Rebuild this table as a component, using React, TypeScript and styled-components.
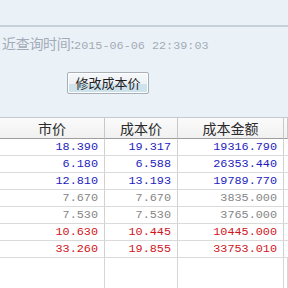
import styled, { createGlobalStyle } from 'styled-components';

const GlobalStyle = createGlobalStyle`
    html, body {
        margin: 0;
        padding: 0;
        background: #ebf2f7;
    }
`;

const Page = styled.div`
    display: flex;
    flex-direction: column;
    width: 288px;
    height: 288px;
    overflow: hidden;
    font-family: "Noto Sans CJK SC", sans-serif;
`;

const TopStrip = styled.div`
    height: 25px;
    border-bottom: 2px solid #c6d0d8;
`;

const QueryLine = styled.div`
    display: flex;
    align-items: baseline;
    height: 16px;
    line-height: 16px;
    margin-top: 8px;
    padding-left: 2px;
    color: #a3abb8;
    white-space: nowrap;
`;

const Label = styled.span`
    font-size: 14px;
    letter-spacing: -0.3px;
`;

const Mono = styled.span`
    font-family: "Liberation Mono", "DejaVu Sans Mono", monospace;
    font-size: 11.8px;
`;

const ButtonRow = styled.div`
    display: flex;
    padding-left: 67px;
    margin-top: 21px;
`;

const Button = styled.button`
    width: 82px;
    height: 22px;
    padding: 0;
    border: 1px solid #a7b0b8;
    border-radius: 2px;
    background: linear-gradient(#f6f8fa 0%, #eef2f5 55%, #cfe3ec 56%, #cde2ea 100%);
    box-shadow: inset 0 0 0 1px #ffffff;
    color: #1e1e1e;
    font-family: "Noto Sans CJK SC", sans-serif;
    font-size: 13px;
    line-height: 20px;
`;

const Table = styled.div`
    flex: 1;
    display: flex;
    flex-direction: column;
    margin-top: 23px;
    background: #ffffff;
    border-top: 1px solid #c3cbd2;
`;

const Row = styled.div<{ $fill?: boolean }>`
    display: grid;
    grid-template-columns: 105px 73px 106px 1fr;
    flex: ${p => (p.$fill ? 1 : 'none')};
`;

const HeadCell = styled.div`
    height: 20px;
    line-height: 20px;
    text-align: center;
    font-size: 14px;
    color: #2a2a2a;
    background: linear-gradient(#fbfbfb, #f1f1f1);
    border-right: 1px solid #c8c8c8;
    border-bottom: 1px solid #9e9e9e;
`;

const Cell = styled.div<{ $tone?: string }>`
    height: 16px;
    line-height: 17px;
    padding-right: 6px;
    text-align: right;
    font-family: "Liberation Mono", "DejaVu Sans Mono", monospace;
    font-size: 11.8px;
    color: ${p => p.$tone ?? '#000'};
    border-right: 1px solid #d2d2d2;
    border-bottom: 1px solid #dadada;
`;

const EmptyCell = styled.div`
    border-right: 1px solid #d6d6d6;
`;

const tones: Record<string, string> = {
    up: '#d0141c',
    down: '#1c1cc0',
    flat: '#858585',
};

const rows = [
    ['18.390', '19.317', '19316.790', 'down'],
    ['6.180', '6.588', '26353.440', 'down'],
    ['12.810', '13.193', '19789.770', 'down'],
    ['7.670', '7.670', '3835.000', 'flat'],
    ['7.530', '7.530', '3765.000', 'flat'],
    ['10.630', '10.445', '10445.000', 'up'],
    ['33.260', '19.855', '33753.010', 'up'],
];

export default function App() {
    return (
        <>
            <GlobalStyle />
            <Page>
                <TopStrip />
                <QueryLine>
                    <Label>近查询时间:</Label>
                    <Mono>2015-06-06 22:39:03</Mono>
                </QueryLine>
                <ButtonRow>
                    <Button>修改成本价</Button>
                </ButtonRow>
                <Table>
                    <Row>
                        <HeadCell>市价</HeadCell>
                        <HeadCell>成本价</HeadCell>
                        <HeadCell>成本金额</HeadCell>
                        <HeadCell />
                    </Row>
                    {rows.map(([price, cost, amount, tone]) => (
                        <Row key={amount}>
                            <Cell $tone={tones[tone]}>{price}</Cell>
                            <Cell $tone={tones[tone]}>{cost}</Cell>
                            <Cell $tone={tones[tone]}>{amount}</Cell>
                            <Cell />
                        </Row>
                    ))}
                    <Row $fill>
                        <EmptyCell />
                        <EmptyCell />
                        <EmptyCell />
                        <EmptyCell />
                    </Row>
                </Table>
            </Page>
        </>
    );
}
